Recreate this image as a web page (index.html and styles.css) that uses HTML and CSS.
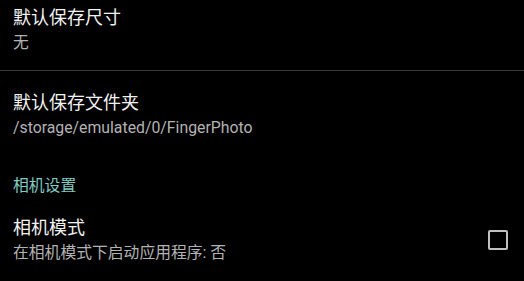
FILE: index.html
```html
<!DOCTYPE html>
<html lang="zh-CN">
<head>
<meta charset="utf-8">
<link rel="stylesheet" href="styles.css">
</head>
<body>
<div class="screen">
  <div class="pref pref-first">
    <div class="pref-text">
      <div class="title">默认保存尺寸</div>
      <div class="summary">无</div>
    </div>
  </div>
  <div class="divider"></div>
  <div class="pref pref-second">
    <div class="pref-text">
      <div class="title">默认保存文件夹</div>
      <div class="summary">/storage/emulated/0/FingerPhoto</div>
    </div>
  </div>
  <div class="category">相机设置</div>
  <div class="pref pref-third">
    <div class="pref-text">
      <div class="title">相机模式</div>
      <div class="summary">在相机模式下启动应用程序: 否</div>
    </div>
    <div class="checkbox"></div>
  </div>
</div>
</body>
</html>
```
FILE: styles.css
```css
html, body {
  margin: 0;
  padding: 0;
  background: #000;
}
.screen {
  width: 524px;
  height: 281px;
  overflow: hidden;
  background: #000;
  font-family: Roboto, "Noto Sans CJK SC", sans-serif;
}
.pref {
  display: flex;
  align-items: center;
  padding: 0 16px 0 13px;
}
.pref-text {
  flex: 1;
}
.title {
  color: #f2f2f2;
  font-size: 18px;
  line-height: 24px;
}
.summary {
  color: #b3b3b3;
  font-size: 15.8px;
  line-height: 22px;
  margin-top: 2px;
}
.pref-first {
  padding-top: 6px;
  padding-bottom: 16px;
}
.divider {
  height: 1px;
  background: #3a3a3a;
}
.pref-second {
  padding-top: 20px;
  padding-bottom: 16px;
}
.category {
  color: #80cbc4;
  font-size: 15.8px;
  line-height: 22px;
  padding: 20px 13px 0;
}
.pref-third {
  padding-top: 19px;
}
.checkbox {
  width: 16px;
  height: 16px;
  border: 2px solid #c0c0c0;
  border-radius: 2px;
}
```
